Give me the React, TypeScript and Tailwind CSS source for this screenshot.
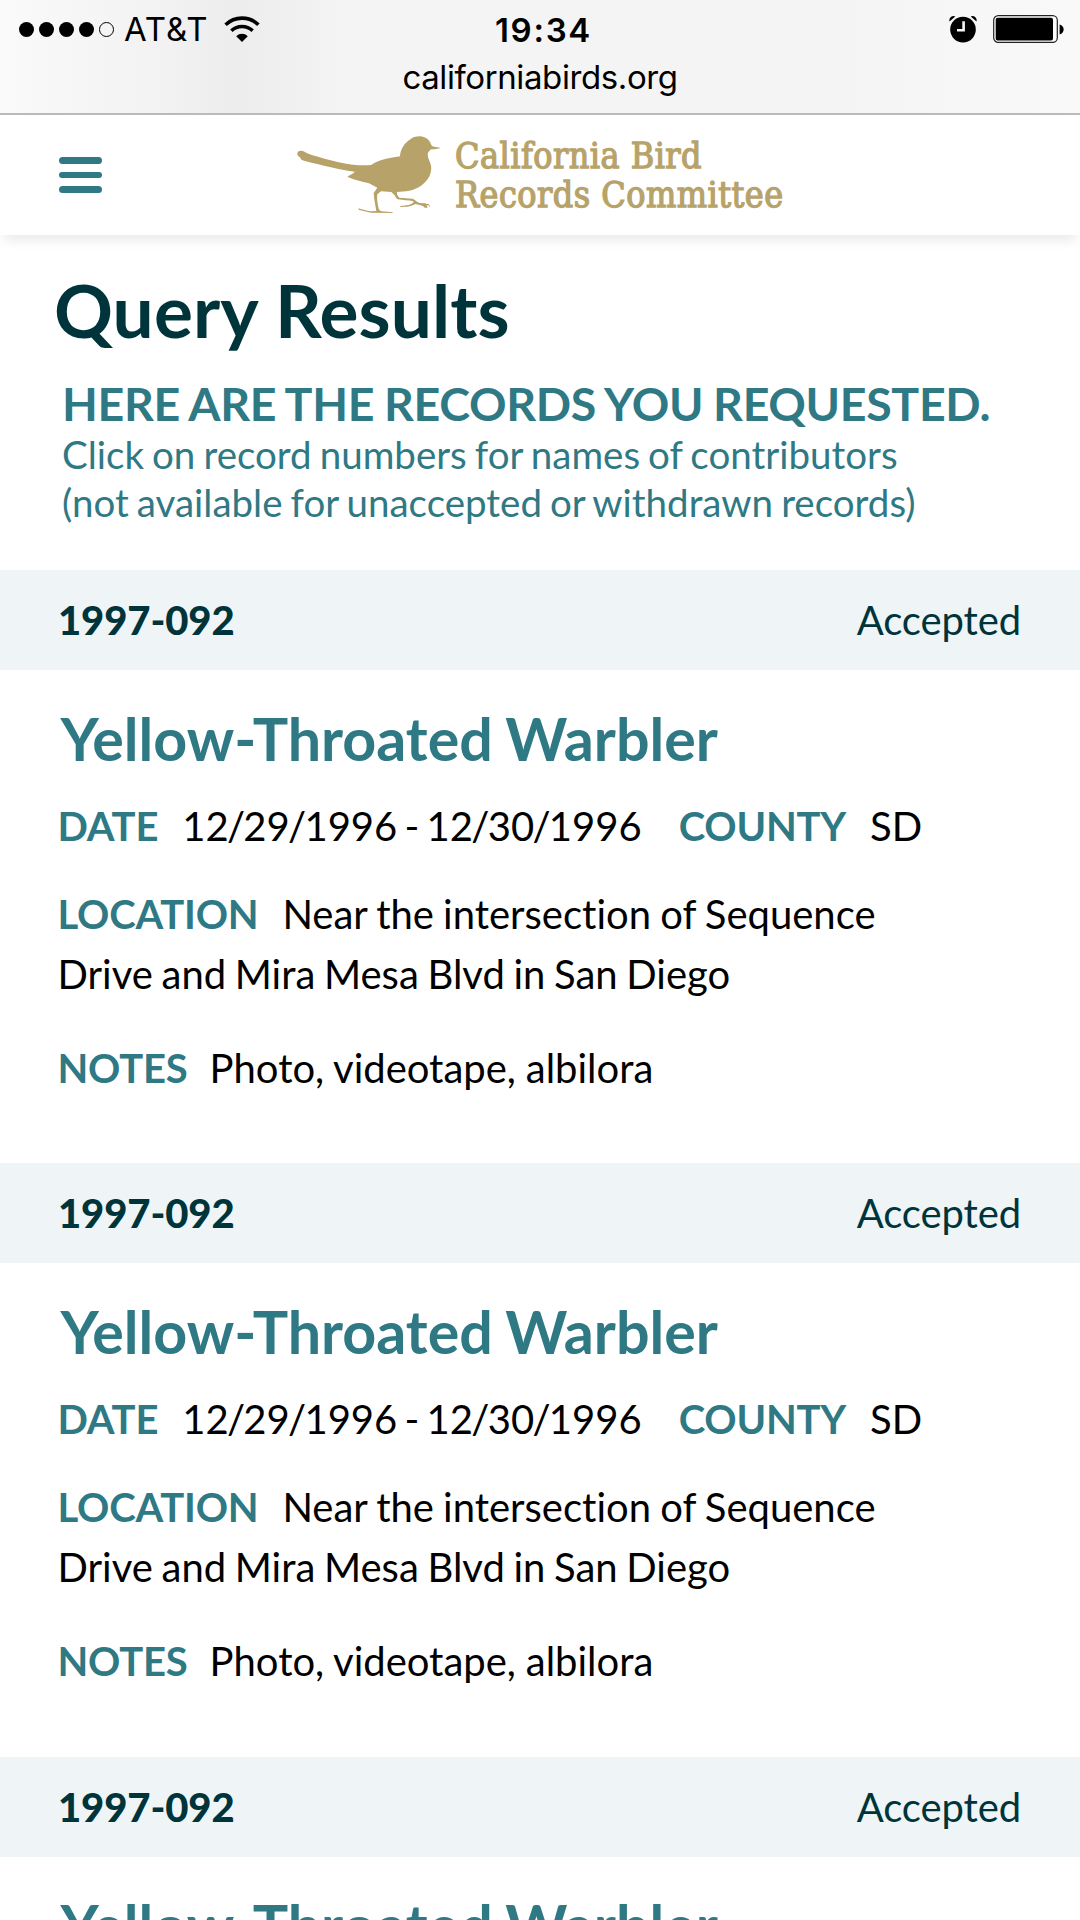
import React from "react";

const records = [
  { id: "1997-092", key: 1 },
  { id: "1997-092", key: 2 },
  { id: "1997-092", key: 3 },
];

function WifiIcon() {
  return (
    <svg className="ml-[18px] h-[28px] w-[36px] shrink-0" viewBox="0 0 36 28" fill="none" stroke="#000" strokeWidth="3.6">
      <path d="M1.6 9.8 A23.5 23.5 0 0 1 34.4 9.8" />
      <path d="M7.4 15.8 A15.3 15.3 0 0 1 28.6 15.8" />
      <path d="M18 27 L12.2 21.2 A8.2 8.2 0 0 1 23.8 21.2 Z" fill="#000" stroke="none" />
    </svg>
  );
}

function AlarmIcon() {
  return (
    <svg className="h-[28px] w-[28px]" viewBox="0 0 28 28">
      <path d="M.5 6.4 A4.2 4.2 0 0 1 6.3 1.5 Z M27.5 6.4 A4.2 4.2 0 0 0 21.7 1.5 Z" fill="#000" />
      <circle cx="14" cy="14.6" r="12.8" fill="#000" />
      <path d="M14.6 6.2 V15.3 H8" fill="none" stroke="#f6f6f6" strokeWidth="2.6" />
    </svg>
  );
}

function BatteryIcon() {
  return (
    <svg className="ml-[16px] h-[28px] w-[71px]" viewBox="0 0 71 28">
      <rect x=".7" y=".7" width="63.6" height="26.6" rx="4.6" fill="#fff" stroke="#222" strokeWidth="1.2" />
      <rect x="2.7" y="2.7" width="57.3" height="22.8" rx="2" fill="#000" />
      <path d="M66.6 9.6 C72 11 72 18 66.6 19.4 Z" fill="#000" />
    </svg>
  );
}

function Bird() {
  return (
    <svg className="h-[78px] w-[144px] shrink-0" viewBox="50 62 432 234" fill="#b7a36a">
      <path d="M51 116 C50 108 58 104 67 107 C73 109 77 113 84 115 C122 128 180 143 218 148 C237 150 256 150 272 149 C290 136 312 130 332 127 L359 123 C360 101 372 83 392 70 C407 61 424 61 437 68 C445 73 450 80 453 89 C455 92 458 94 462 94 L480 97 L479 99 L463 102 L453 102 C447 106 443 110 442 117 C442 129 450 139 452 151 C455 169 448 187 434 201 C420 216 400 225 378 228 L350 230 C349 237 353 243 357 247 C371 249 386 248 397 250 C404 253 410 260 418 263 L432 264 L434 262 L437 266 L444 265 L449 272 L448 275 L444 270 L439 270 L442 277 L433 277 L428 272 L406 266 C401 267 396 271 388 273 C379 275 369 275 360 275 L360 272 C373 271 384 270 391 267 C396 264 400 262 399 258 C386 254 367 255 352 252 C347 250 346 244 342 239 L333 230 L302 228 L291 237 C289 252 292 268 296 283 L303 288 L338 291 L336 293 L272 292 C260 290 245 286 236 284 L234 279 C248 283 259 286 270 288 L288 287 C285 270 281 250 280 233 L291 217 L266 204 C243 199 222 193 202 185 C202 181 220 175 223 169 C184 164 122 149 71 136 C65 136 61 132 59 126 C54 123 51 121 51 116 Z" />
    </svg>
  );
}

function StatusBar() {
  return (
    <div className="grid h-[115px] grid-cols-[1fr_280px_1fr] border-b-2 border-[#b9bbbb] bg-[linear-gradient(90deg,#fafafa_0%,#f2f2f2_15%,#ededed_22%,#f1f1f1_28%,#f4f4f4_33%,#f4f4f4_75%,#f9f9f9_100%)] font-[Inter,sans-serif] text-black">
      <div className="flex h-[58px] items-center pl-[19px]">
        <div className="flex gap-[5px]">
          <i className="size-[15px] rounded-full bg-black" />
          <i className="size-[15px] rounded-full bg-black" />
          <i className="size-[15px] rounded-full bg-black" />
          <i className="size-[15px] rounded-full bg-black" />
          <i className="size-[15px] rounded-full border border-black" />
        </div>
        <span className="ml-[10px] w-[82px] whitespace-nowrap text-[33px] font-normal leading-[60px] tracking-[0.9px]">AT&amp;T</span>
        <WifiIcon />
      </div>
      <div className="flex flex-col items-center whitespace-nowrap">
        <span className="mt-[10px] h-[47px] pl-[7px] text-[33px] font-semibold leading-[40px] tracking-[1.7px]">19:34</span>
        <span className="text-[33px] font-normal leading-[40px] tracking-[-0.4px]">californiabirds.org</span>
      </div>
      <div className="flex h-[58px] items-center justify-end pr-[16px]">
        <AlarmIcon />
        <BatteryIcon />
      </div>
    </div>
  );
}

function Header() {
  return (
    <header className="flex h-[120px] items-center bg-white pl-[59px] shadow-[0_10px_10px_-4px_rgba(0,0,0,0.08)]">
      <button aria-label="Menu" className="flex flex-col gap-[8px]">
        <i className="h-[6.5px] w-[43px] rounded-full bg-[#2f7985]" />
        <i className="h-[6.5px] w-[43px] rounded-full bg-[#2f7985]" />
        <i className="h-[6.5px] w-[43px] rounded-full bg-[#2f7985]" />
      </button>
      <div className="ml-[195px] flex items-center">
        <Bird />
        <div className="ml-[14px] whitespace-nowrap font-['DejaVu_Serif_Condensed','DejaVu_Serif',serif] text-[35.5px] leading-[39.5px] tracking-[0.5px] text-[#b7a36a] [-webkit-text-stroke:1.3px_#b7a36a]">
          <div>California Bird</div>
          <div>Records Committee</div>
        </div>
      </div>
    </header>
  );
}

function Label({ children }: { children: React.ReactNode }) {
  return <b className="font-bold tracking-[-0.2px] text-[#2f7985]">{children}</b>;
}

/* Date with its slashes set tight against the digits. */
function DateText({ value }: { value: string }) {
  return (
    <>
      {value.split("/").map((part, i) => (
        <React.Fragment key={i}>
          {i > 0 && <span className="-mx-[1.7px]">/</span>}
          {part}
        </React.Fragment>
      ))}
    </>
  );
}

function Record({ id }: { id: string }) {
  return (
    <section className="h-[593px] nth-of-type-[2]:h-[594px]">
      <div className="flex h-[100px] items-center justify-between bg-[#eff4f6] pl-[58px] pr-[59px] text-[40px] leading-[48px] text-[#00343b]">
        <b className="font-black tracking-[-0.1px]">{id}</b>
        <span className="tracking-[-0.1px]">Accepted</span>
      </div>
      <div className="whitespace-nowrap pl-[57.5px] text-[40px] text-black [font-variant-ligatures:none] [word-spacing:-1.6px]">
        <h2 className="pt-[33px] pl-[3px] text-[59.2px] font-bold leading-[72px] text-[#2f7985]">Yellow-Throated Warbler</h2>
        <p className="mt-[21px] flex leading-[60px]">
          <Label>DATE</Label>
          <span className="ml-[24px] [word-spacing:-3px]">
            <DateText value="12/29/1996 - 12/30/1996" />
          </span>
          <span className="ml-[37px]"><Label>COUNTY</Label></span>
          <span className="ml-[24px]">SD</span>
        </p>
        <p className="mt-[28px] leading-[60px]">
          <Label>LOCATION</Label>
          <span className="ml-[24px] [word-spacing:-1.1px]">Near the intersection of Sequence</span>
          <br />
          Drive and Mira Mesa Blvd in San Diego
        </p>
        <p className="mt-[34px] leading-[60px]">
          <span className="-mr-[2px]"><Label>NOTES</Label></span>
          <span className="ml-[24px] [word-spacing:-0.4px]">Photo, videotape, albilora</span>
        </p>
      </div>
    </section>
  );
}

export default function App() {
  return (
    <div className="h-[1920px] w-[1080px] overflow-hidden bg-white font-[Lato,sans-serif]">
      <StatusBar />
      <Header />
      <main>
        <div className="h-[335px] whitespace-nowrap pt-[36px]">
          <h1 className="pl-[54px] text-[73px] font-bold leading-[78px] tracking-[0.1px] text-[#00343b]">Query Results</h1>
          <div className="mt-[27px] pl-[62px] text-[#2f7985] [font-variant-ligatures:none]">
            <h2 className="text-[46.5px] font-bold leading-[55px] tracking-[-0.33px] [word-spacing:-1.1px]">HERE ARE THE RECORDS YOU REQUESTED.</h2>
            <p className="-mt-px text-[38.5px] leading-[48px] [word-spacing:-1.8px]">
              Click on record numbers for names of contributors
              <br />
              (not available for unaccepted or withdrawn records)
            </p>
          </div>
        </div>
        {records.map((r) => (
          <Record key={r.key} id={r.id} />
        ))}
      </main>
    </div>
  );
}
